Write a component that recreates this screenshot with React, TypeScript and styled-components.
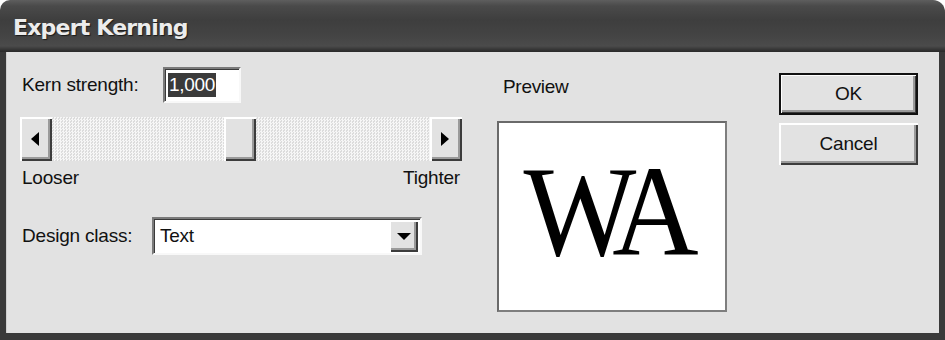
import React from "react";
import styled, { createGlobalStyle } from "styled-components";

const Global = createGlobalStyle`
  html, body { margin: 0; padding: 0; background: #ffffff; }
  body { width: 945px; height: 340px; overflow: hidden; }
  #root { width: 945px; height: 340px; }
`;

const Window = styled.div`
  width: 945px;
  height: 340px;
  display: flex;
  flex-direction: column;
  font-family: "Liberation Sans", Arial, sans-serif;
  color: #111;
`;

const TitleBar = styled.div`
  height: 52px;
  flex: none;
  box-sizing: border-box;
  border-radius: 10px 12px 0 0;
  background: linear-gradient(
    to bottom,
    #5e5e5e 0px,
    #4a4a4a 6px,
    #3e3e3e 20px,
    #444 36px,
    #4b4b4b 46px,
    #333 50px,
    #2a2a2a 52px
  );
  display: flex;
  align-items: center;
  padding: 3px 0 0 13px;
`;

const Title = styled.span`
  font-family: "DejaVu Sans", Verdana, sans-serif;
  font-weight: bold;
  font-size: 22px;
  letter-spacing: -0.8px;
  color: #ececec;
  text-shadow: 1px 1px 1px #1a1a1a;
`;

const Frame = styled.div`
  flex: 1;
  display: flex;
  background: #3a3a3a;
  padding: 0 6px 7px 6px;
`;

const Body = styled.div`
  flex: 1;
  background: #e2e2e2;
  border-left: 1px solid #cfcfcf;
  display: grid;
  grid-template-columns: 442px 265px 140px;
  padding: 15px 0 0 13px;
  align-items: start;
`;

const LeftCol = styled.div`
  display: flex;
  flex-direction: column;
`;

const Row = styled.div`
  display: flex;
  align-items: center;
`;

const Label = styled.span<{ $w?: number }>`
  font-size: 19px;
  letter-spacing: -0.2px;
  color: #111;
  box-sizing: border-box;
  width: ${(p) => (p.$w ? `${p.$w}px` : "auto")};
  padding-left: 2px;
  flex: none;
`;

const Sunken = styled.div`
  box-sizing: border-box;
  background: #fff;
  border-top: 2px solid #7a7a7a;
  border-left: 2px solid #7a7a7a;
  border-right: 2px solid #f8f8f8;
  border-bottom: 2px solid #f8f8f8;
  box-shadow: inset 1px 1px 0 #3a3a3a;
`;

const NumberBox = styled(Sunken)`
  width: 78px;
  height: 36px;
  display: flex;
  align-items: center;
  padding-left: 3px;
`;

const Selected = styled.span`
  background: #3a3a3a;
  color: #fff;
  font-size: 19px;
  line-height: 24px;
  padding: 0 1px;
  letter-spacing: -0.3px;
`;

const Slider = styled.div`
  margin-top: 14px;
  width: 442px;
  height: 44px;
  display: flex;
  background-color: #f2f2f2;
  background-image: repeating-conic-gradient(#f6f6f6 0 25%, #dcdcdc 0 50%);
  background-size: 3px 3px;
`;

const Raised = styled.div`
  box-sizing: border-box;
  background: #e2e2e2;
  box-shadow: inset 2px 2px 0 #ffffff, inset -2px -2px 0 #3c3c3c,
    inset -4px -4px 0 #9a9a9a;
`;

const ArrowButton = styled(Raised)`
  width: 32px;
  height: 44px;
  flex: none;
  display: flex;
  align-items: center;
  justify-content: center;
  padding-right: 2px;
`;

const Tri = styled.span<{ $dir: "left" | "right" | "down" }>`
  width: 0;
  height: 0;
  ${(p) =>
    p.$dir === "left"
      ? "border-top: 7px solid transparent; border-bottom: 7px solid transparent; border-right: 8px solid #000;"
      : p.$dir === "right"
      ? "border-top: 7px solid transparent; border-bottom: 7px solid transparent; border-left: 8px solid #000;"
      : "border-left: 7px solid transparent; border-right: 7px solid transparent; border-top: 7px solid #000;"}
`;

const TrackPart = styled.div<{ $w: number }>`
  width: ${(p) => p.$w}px;
  flex: none;
`;

const Thumb = styled(Raised)`
  width: 32px;
  height: 44px;
  flex: none;
`;

const Ends = styled.div`
  display: flex;
  justify-content: space-between;
  width: 440px;
  margin-top: 6px;
`;

const DesignRow = styled(Row)`
  margin-top: 28px;
`;

const Select = styled(Sunken)`
  width: 270px;
  height: 38px;
  display: flex;
  align-items: center;
  justify-content: space-between;
  padding: 0 2px 0 6px;
`;

const SelectText = styled.span`
  font-size: 19px;
  letter-spacing: -0.3px;
`;

const DropButton = styled(Raised)`
  width: 29px;
  height: 32px;
  display: flex;
  align-items: center;
  justify-content: center;
`;

const PreviewCol = styled.div`
  display: flex;
  flex-direction: column;
  padding-left: 35px;
`;

const PreviewLabel = styled.span`
  font-size: 19px;
  letter-spacing: -0.3px;
  padding: 9px 0 0 6px;
  height: 30px;
`;

const PreviewBox = styled.div`
  margin-top: 15px;
  width: 230px;
  height: 191px;
  box-sizing: border-box;
  background: #fff;
  border: 2px solid #6a6a6a;
  border-right-color: #7e7e7e;
  border-bottom-color: #7e7e7e;
  display: flex;
  align-items: center;
  justify-content: center;
  padding: 0 2px 12px 0;
`;

const Sample = styled.span`
  display: inline-block;
  font-family: "Liberation Serif", "Times New Roman", serif;
  font-size: 130px;
  line-height: 1;
  color: #000;
  letter-spacing: -12px;
  padding-right: 12px;
  transform: scaleX(0.92);
`;

const ButtonCol = styled.div`
  display: flex;
  flex-direction: column;
  gap: 8px;
  margin-left: 52px;
  margin-top: 6px;
`;

const PushButton = styled(Raised)<{ $default?: boolean }>`
  width: 139px;
  height: 42px;
  display: flex;
  align-items: center;
  justify-content: center;
  font-size: 19px;
  letter-spacing: -0.2px;
  color: #111;
  ${(p) =>
    p.$default
      ? "border: 2px solid #111; box-shadow: inset 1px 1px 0 #fff, inset -1px -1px 0 #3c3c3c, inset -3px -3px 0 #9a9a9a;"
      : ""}
`;

export default function App() {
  return (
    <>
      <Global />
      <Window>
        <TitleBar>
          <Title>Expert Kerning</Title>
        </TitleBar>
        <Frame>
          <Body>
            <LeftCol>
              <Row>
                <Label $w={143}>Kern strength:</Label>
                <NumberBox>
                  <Selected>1,000</Selected>
                </NumberBox>
              </Row>
              <Slider>
                <ArrowButton>
                  <Tri $dir="left" />
                </ArrowButton>
                <TrackPart $w={172} />
                <Thumb />
                <TrackPart $w={174} />
                <ArrowButton>
                  <Tri $dir="right" />
                </ArrowButton>
              </Slider>
              <Ends>
                <Label>Looser</Label>
                <Label>Tighter</Label>
              </Ends>
              <DesignRow>
                <Label $w={132}>Design class:</Label>
                <Select>
                  <SelectText>Text</SelectText>
                  <DropButton>
                    <Tri $dir="down" />
                  </DropButton>
                </Select>
              </DesignRow>
            </LeftCol>
            <PreviewCol>
              <PreviewLabel>Preview</PreviewLabel>
              <PreviewBox>
                <Sample>WA</Sample>
              </PreviewBox>
            </PreviewCol>
            <ButtonCol>
              <PushButton $default>OK</PushButton>
              <PushButton>Cancel</PushButton>
            </ButtonCol>
          </Body>
        </Frame>
      </Window>
    </>
  );
}
